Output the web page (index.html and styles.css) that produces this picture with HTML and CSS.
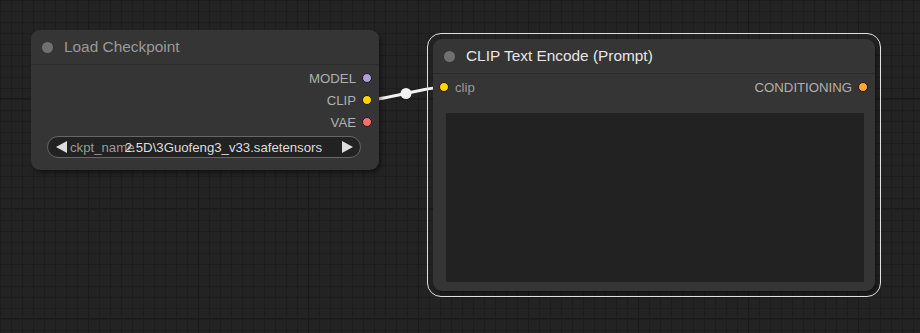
FILE: index.html
```html
<!DOCTYPE html>
<html lang="en">

<head>
  <meta charset="UTF-8">
  <title>Graph</title>
  <link rel="stylesheet" href="styles.css">
</head>

<body>
  <div class="canvas">
    <!-- links sit behind the nodes -->
    <svg class="links" width="920" height="333" viewBox="0 0 920 333">
      <path d="M367 100 C386 100 425 87 444 87" fill="none" stroke="#f2f2f2" stroke-width="3" />
      <circle cx="406" cy="93.5" r="5.5" fill="#f2f2f2" />
    </svg>

    <div class="node checkpoint">
      <div class="node-title">
        <span class="title-dot"></span>
        <span class="title-text">Load Checkpoint</span>
      </div>
      <div class="node-body">
        <div class="slot out">
          <span class="slot-label">MODEL</span>
          <span class="slot-dot model"></span>
        </div>
        <div class="slot out">
          <span class="slot-label">CLIP</span>
          <span class="slot-dot clip"></span>
        </div>
        <div class="slot out">
          <span class="slot-label">VAE</span>
          <span class="slot-dot vae"></span>
        </div>
        <div class="combo">
          <svg class="arrow" width="11" height="12" viewBox="0 0 11 12">
            <polygon points="11,0 11,12 0,6" fill="#ddd" />
          </svg>
          <div class="combo-text">
            <span class="combo-name">ckpt_name</span>
            <span class="combo-value">2.5D\3Guofeng3_v33.safetensors</span>
          </div>
          <svg class="arrow" width="11" height="12" viewBox="0 0 11 12">
            <polygon points="0,0 0,12 11,6" fill="#ddd" />
          </svg>
        </div>
      </div>
    </div>

    <div class="node encode selected">
      <div class="node-title">
        <span class="title-dot"></span>
        <span class="title-text">CLIP Text Encode (Prompt)</span>
      </div>
      <div class="node-body">
        <div class="slot io">
          <span class="slot-dot clip"></span>
          <span class="slot-label in-label">clip</span>
          <span class="spacer"></span>
          <span class="slot-label">CONDITIONING</span>
          <span class="slot-dot cond"></span>
        </div>
        <textarea class="prompt"></textarea>
      </div>
    </div>
  </div>
</body>

</html>
```

FILE: styles.css
```css
* {
  padding: 0;
  margin: 0;
  box-sizing: border-box;
}

body {
  background: #222;
  font-family: "Liberation Sans", Arial, sans-serif;
  overflow: hidden;
}

/* 画布网格：11px 小格，110px 大格 */
.canvas {
  position: relative;
  width: 920px;
  height: 333px;
  overflow: hidden;
  background-color: #232323;
  background-image:
    linear-gradient(to right, #1a1a1a 1px, transparent 1px),
    linear-gradient(to bottom, #1a1a1a 1px, transparent 1px),
    linear-gradient(to right, #1d1d1d 1px, transparent 1px),
    linear-gradient(to bottom, #1d1d1d 1px, transparent 1px);
  background-size: 110px 110px, 110px 110px, 11px 11px, 11px 11px;
  background-position: 88px 0, 0 98px, 0 0, 0 0;
}

.links {
  position: absolute;
  top: 0;
  left: 0;
}

.node {
  position: absolute;
  background: #353535;
  border-radius: 9px;
  box-shadow: 2px 3px 4px rgba(0, 0, 0, .45);
}

.checkpoint {
  left: 31px;
  top: 30px;
  width: 348px;
  height: 140px;
}

.encode {
  left: 433px;
  top: 39px;
  width: 442px;
  height: 252px;
}

/* 选中状态的外框 */
.selected::before {
  content: "";
  position: absolute;
  top: -6px;
  left: -6px;
  right: -6px;
  bottom: -6px;
  border: 1.5px solid #e0e0e0;
  border-radius: 14px;
}

.node-title {
  display: flex;
  align-items: center;
  height: 35px;
  padding-left: 11px;
  background: #353535;
  border-radius: 9px 9px 0 0;
  border-bottom: 1px solid #2b2b2b;
}

.title-dot {
  width: 11px;
  height: 11px;
  border-radius: 50%;
  background: #707070;
  margin-right: 11px;
}

.title-text {
  font-size: 15.4px;
  color: #999;
}

.selected .title-text {
  color: #e6e6e6;
}

.node-body {
  padding-top: 2px;
}

.slot {
  display: flex;
  align-items: center;
  height: 22px;
  font-size: 13.2px;
}

.slot.out {
  justify-content: flex-end;
  padding-right: 7px;
}

.slot.io {
  padding: 0 7px 0 6px;
}

.slot-label {
  color: #b0b0b0;
}

.in-label {
  color: #999;
  margin-left: 6px;
}

.spacer {
  flex: 1;
}

.slot-dot {
  width: 10px;
  height: 10px;
  border-radius: 50%;
  border: 1px solid #1a1a1a;
}

.out .slot-dot,
.io .cond {
  margin-left: 6px;
}

.model {
  background: #b39ddb;
}

.clip {
  background: #ffd500;
}

.vae {
  background: #ff6e6e;
}

.cond {
  background: #ffa931;
}

.combo {
  display: flex;
  align-items: center;
  height: 22px;
  margin: 3px 18px 0 16px;
  padding: 0 7px 0 8px;
  background: #222;
  border: 1px solid #666;
  border-radius: 11px;
}

.combo-text {
  flex: 1;
  display: grid;
  margin: 0 5px 0 3px;
  font-size: 13.2px;
}

.combo-name,
.combo-value {
  grid-area: 1 / 1;
}

.combo-name {
  color: #999;
  justify-self: start;
}

.combo-value {
  color: #ddd;
  justify-self: end;
  margin-right: 15px;
}

.prompt {
  display: block;
  width: 418px;
  height: 169px;
  margin: 15px 0 0 13px;
  background: #222;
  border: none;
  resize: none;
  outline: none;
}
```
